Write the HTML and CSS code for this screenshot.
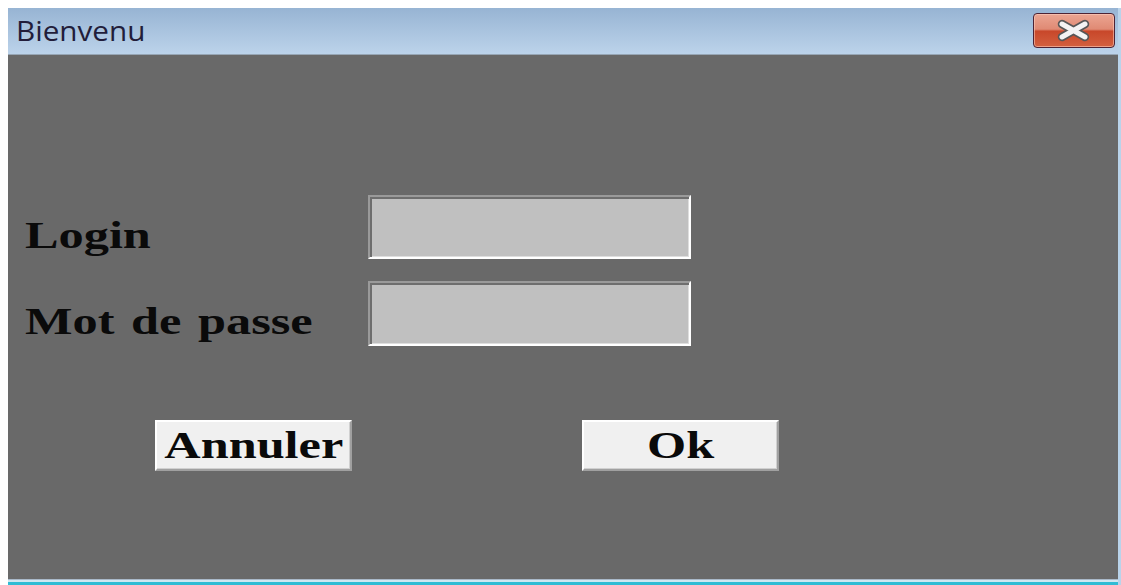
FILE: index.html
```html
<!DOCTYPE html>
<html lang="fr">
<head>
<meta charset="utf-8">
<title>Bienvenu</title>
<link rel="stylesheet" href="styles.css">
</head>
<body>
<div class="window">
  <div class="titlebar">
    <span class="title">Bienvenu</span>
    <button class="close" type="button" aria-label="Fermer">
      <svg width="80" height="33" viewBox="0 0 80 33">
        <path d="M28 10 L51 23 M51 10 L28 23" stroke="#575757" stroke-width="8.5" stroke-linecap="round" fill="none"/>
        <path d="M28 10 L51 23 M51 10 L28 23" stroke="#f4f4f4" stroke-width="5" stroke-linecap="round" fill="none"/>
      </svg>
    </button>
  </div>
  <div class="client">
    <div class="row">
      <span class="label"><span class="wide">Login</span></span>
      <div class="field"></div>
    </div>
    <div class="row second">
      <span class="label"><span class="wide">Mot de passe</span></span>
      <div class="field"></div>
    </div>
    <div class="actions">
      <button class="btn" type="button"><span class="wide center">Annuler</span></button>
      <button class="btn" type="button"><span class="wide center">Ok</span></button>
    </div>
  </div>
  <div class="frame-bottom"></div>
</div>
</body>
</html>
```
FILE: styles.css
```css
html, body {
  margin: 0;
  height: 100%;
  background: #ffffff;
}

body {
  padding: 8px 0 0 8px;
  box-sizing: border-box;
  overflow: hidden;
}

.window {
  display: flex;
  flex-direction: column;
  height: 577px;
  border-right: 3px solid #b9d3ea;
}

/* caption bar */
.titlebar {
  height: 46px;
  border-bottom: 1px solid #97a6b5;
  background: linear-gradient(#97b4d3, #bcd3ea);
  display: flex;
  justify-content: space-between;
  align-items: flex-start;
}

.title {
  display: inline-block;
  font-family: "Open Sans", "Noto Sans", sans-serif;
  font-size: 28px;
  line-height: 28px;
  margin: 8px 0 0 8px;
  color: #221d3a;
  transform: scaleX(1.06);
  transform-origin: left center;
}

.close {
  margin: 5px 3px 0 0;
  width: 82px;
  height: 35px;
  padding: 0;
  border: 1px solid #4d2334;
  border-radius: 4px;
  background: linear-gradient(#eba592 0%, #e08a74 46%, #c8472a 52%, #d3603f 100%);
  box-shadow: inset 0 0 0 1px rgba(255, 210, 195, 0.55);
  display: flex;
  align-items: center;
  justify-content: center;
}

.close svg {
  display: block;
}

/* dialog body */
.client {
  flex: 1;
  background: #696969;
  padding: 140px 0 0 17px;
  display: flex;
  flex-direction: column;
}

.row {
  display: flex;
  height: 64px;
}

.row.second {
  margin-top: 22px;
  height: 65px;
}

.label {
  width: 343px;
  padding-top: 22px;
  font-family: "Liberation Serif", "Times New Roman", serif;
  font-weight: bold;
  font-size: 37px;
  line-height: 37px;
  word-spacing: 3px;
  color: #0a0a0a;
}

.wide {
  display: inline-block;
  transform: scaleX(1.36);
  transform-origin: left center;
}

.wide.center {
  transform-origin: center center;
}

.field {
  width: 323px;
  box-sizing: border-box;
  background: #c0c0c0;
  border-style: solid;
  border-width: 2px;
  border-color: #9a9a9a #ffffff #ffffff #9a9a9a;
  box-shadow: inset 2px 2px 0 #6e6e6e, inset -1px -1px 0 #dedede;
}

.actions {
  display: flex;
  gap: 230px;
  margin-top: 74px;
  padding-left: 130px;
}

.btn {
  width: 197px;
  height: 51px;
  box-sizing: border-box;
  padding: 0;
  background: #f0f0f0;
  border-style: solid;
  border-width: 2px;
  border-color: #ffffff #a0a0a0 #a0a0a0 #ffffff;
  box-shadow: inset -1px -1px 0 #d0d0d0;
  display: flex;
  align-items: center;
  justify-content: center;
  font-family: "Liberation Serif", "Times New Roman", serif;
  font-weight: bold;
  font-size: 37px;
  line-height: 37px;
  color: #0a0a0a;
}

/* lower frame edge */
.frame-bottom {
  height: 6px;
  background: linear-gradient(#a9b9c9 0px, #a9b9c9 1px, #cfe7f0 1px, #cfe7f0 3px, #2fbcd4 3px, #2fbcd4 6px);
}
```
